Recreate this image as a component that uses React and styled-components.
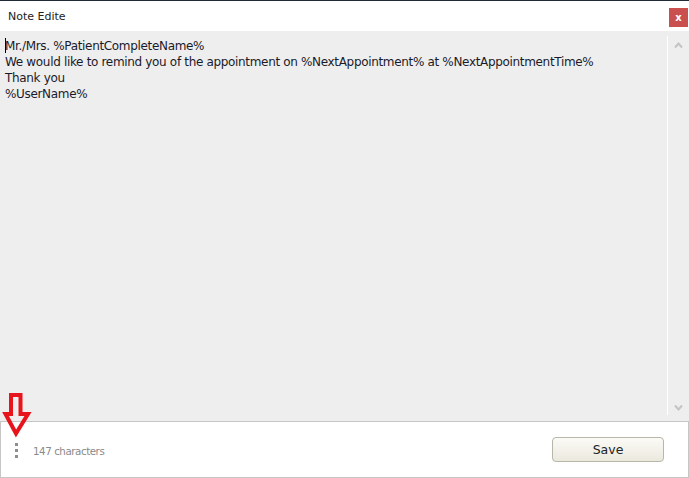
import React from 'react'
import styled, { createGlobalStyle } from 'styled-components'

const Global = createGlobalStyle`
  html, body { margin: 0; padding: 0; background: #ffffff; }
  body { font-family: "DejaVu Sans", "Liberation Sans", sans-serif; }
`

const Window = styled.div`
  width: 689px;
  height: 478px;
  display: flex;
  flex-direction: column;
  position: relative;
  border-top: 1px solid #1f2b36;
  box-sizing: border-box;
  background: #fff;
`

const TitleBar = styled.div`
  height: 30px;
  display: flex;
  align-items: center;
  justify-content: space-between;
  padding: 0 1px 0 8px;
  font-size: 11px;
  color: #222;
`

const CloseButton = styled.div`
  width: 19px;
  height: 19px;
  background: #c9504f;
  color: #fff;
  font-size: 10px;
  font-weight: bold;
  display: flex;
  align-items: center;
  justify-content: center;
  margin-top: 3px;
`

const Editor = styled.div`
  flex: 1;
  background: #eeeeee;
  display: flex;
`

const TextArea = styled.div`
  flex: 1;
  padding: 7px 5px;
  font-size: 12px;
  letter-spacing: -0.33px;
  line-height: 16px;
  color: #1a1a2a;
  white-space: pre;
`

const Caret = styled.span`
  display: inline-block;
  width: 1px;
  height: 15px;
  background: #000;
  vertical-align: -3px;
  margin-right: -1px;
`

const ScrollBar = styled.div`
  width: 21px;
  border-left: 1px solid #ffffff;
  margin: 5px 0 6px;
  display: flex;
  flex-direction: column;
  justify-content: space-between;
  align-items: center;
  padding: 5px 0 3px;
`

const Footer = styled.div`
  height: 57px;
  border: 1px solid #c6c6c6;
  box-sizing: border-box;
  display: flex;
  align-items: center;
  padding: 0 24px 0 14px;
`

const Dots = styled.div`
  display: flex;
  flex-direction: column;
  gap: 3px;
  margin-right: 15px;
  margin-top: 2px;
  span {
    width: 3px;
    height: 3px;
    background: #8e8e8e;
  }
`

const Count = styled.div`
  flex: 1;
  font-size: 10.3px;
  letter-spacing: -0.45px;
  color: #8a8a8a;
  margin-top: 3px;
`

const SaveButton = styled.button`
  width: 112px;
  height: 25px;
  border: 1px solid #b8b6a6;
  border-radius: 4px;
  background: linear-gradient(#fbfaf6, #ebe9de);
  font-family: "DejaVu Sans", sans-serif;
  font-size: 12.5px;
  color: #222;
  padding: 0;
`

const Arrow = styled.svg`
  position: absolute;
  left: 0;
  top: 390px;
`

const Chevron = ({ up }) => (
  <svg width="11" height="8" viewBox="0 0 11 8">
    <path d={up ? 'M2 6.5 L5.5 2.5 L9 6.5' : 'M2 1.5 L5.5 5.5 L9 1.5'} fill="none" stroke="#c4c4c4" strokeWidth="2" />
  </svg>
)

export default function App() {
  return (
    <>
      <Global />
      <Window>
        <TitleBar>
          <span>Note Edite</span>
          <CloseButton>x</CloseButton>
        </TitleBar>
        <Editor>
          <TextArea>
            <Caret />
            {'Mr./Mrs. %PatientCompleteName%\nWe would like to remind you of the appointment on %NextAppointment% at %NextAppointmentTime%\nThank you\n%UserName%'}
          </TextArea>
          <ScrollBar>
            <Chevron up />
            <Chevron />
          </ScrollBar>
        </Editor>
        <Footer>
          <Dots><span /><span /><span /></Dots>
          <Count>147 characters</Count>
          <SaveButton>Save</SaveButton>
        </Footer>
        <Arrow width="34" height="48" viewBox="0 0 34 48">
          <path d="M11 4 H20.5 V23 H28 L16 42.5 L5.5 23 H11 Z" fill="none" stroke="#e8141b" strokeWidth="4" strokeLinejoin="miter" />
        </Arrow>
      </Window>
    </>
  )
}
